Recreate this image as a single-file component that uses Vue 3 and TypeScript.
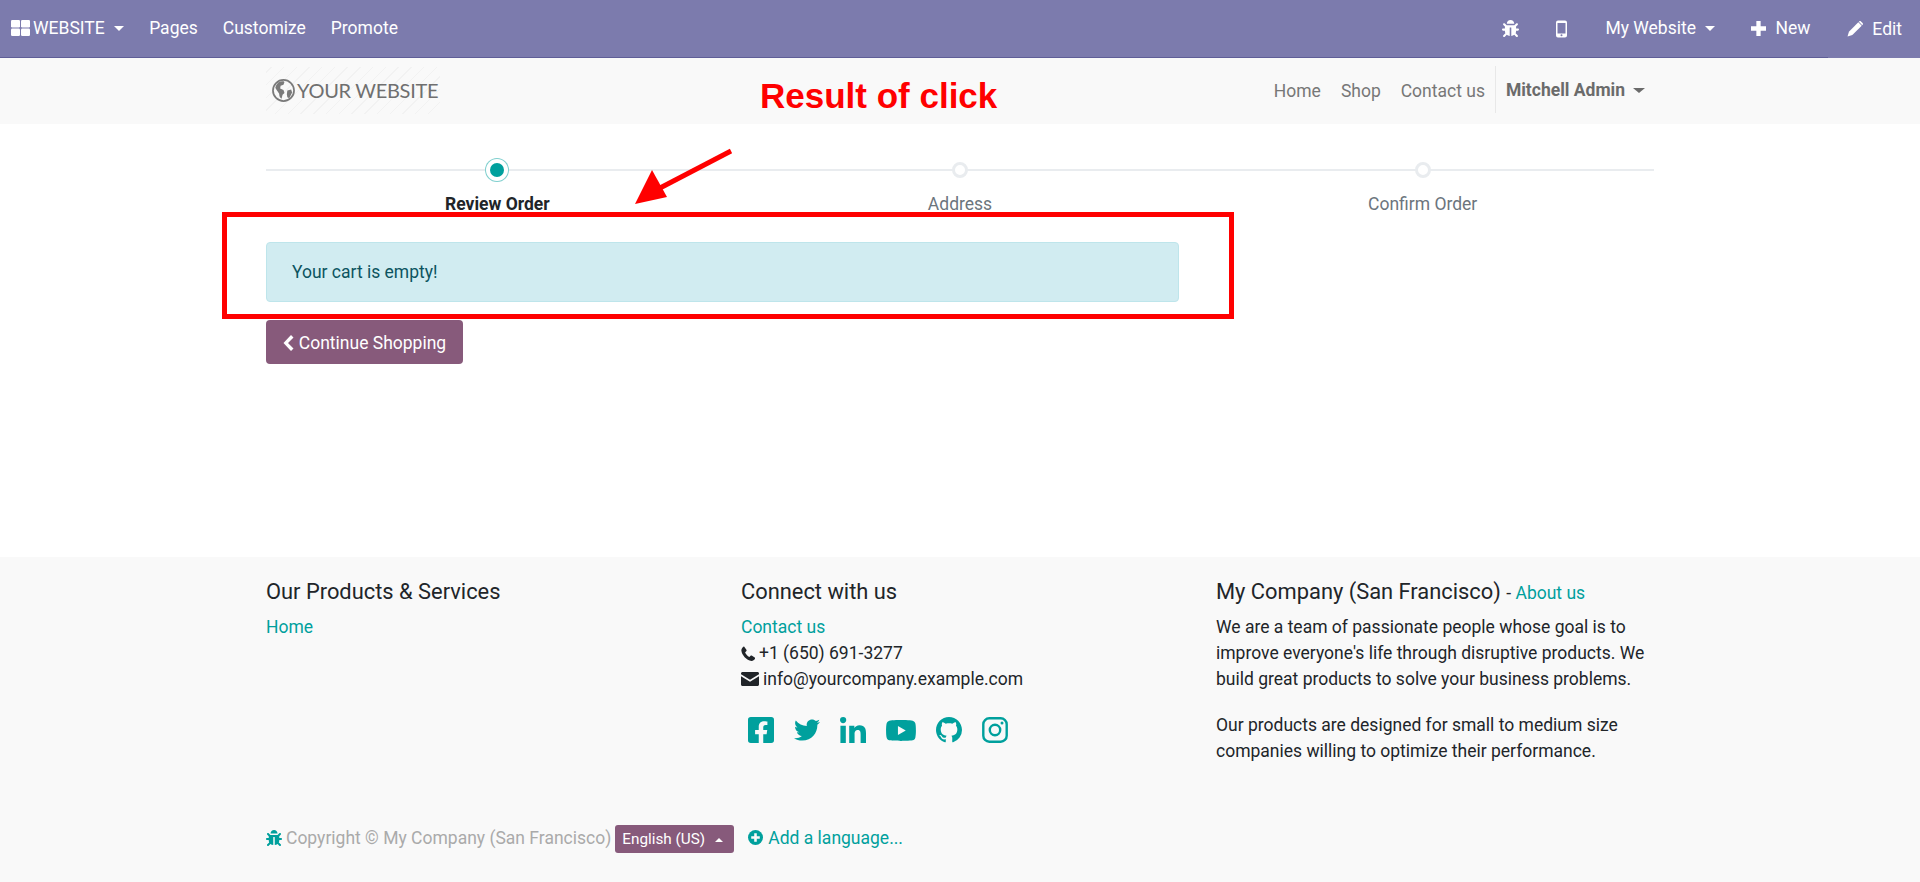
<script setup lang="ts">
interface SocialIcon {
  name: string
  viewBox: string
  d: string
}

const adminLinks = ['Pages', 'Customize', 'Promote']
const siteLinks = ['Home', 'Shop', 'Contact us']
const steps = [
  { label: 'Review Order', active: true },
  { label: 'Address', active: false },
  { label: 'Confirm Order', active: false },
]

const bug =
  'M511.988 288.9c-.478 17.43-15.217 31.1-32.653 31.1H424v16c0 21.864-4.882 42.584-13.6 61.145l60.228 60.228c12.496 12.497 12.496 32.758 0 45.255-12.498 12.497-32.759 12.496-45.256 0l-54.736-54.736C345.886 467.965 314.351 480 280 480V236c0-6.627-5.373-12-12-12h-24c-6.627 0-12 5.373-12 12v244c-34.351 0-65.886-12.035-90.636-32.108l-54.736 54.736c-12.498 12.497-32.759 12.496-45.256 0-12.496-12.497-12.496-32.758 0-45.255l60.228-60.228C92.882 378.584 88 357.864 88 336v-16H32.666C15.23 320 .491 306.33.013 288.9-.484 270.816 14.028 256 32 256h56v-58.745l-46.628-46.628c-12.496-12.497-12.496-32.758 0-45.255 12.498-12.497 32.758-12.497 45.256 0L141.255 160h229.489l54.627-54.627c12.498-12.497 32.758-12.497 45.256 0 12.496 12.497 12.496 32.758 0 45.255L424 197.255V256h56c17.972 0 32.484 14.816 31.988 32.9zM257 0c-61.856 0-112 50.144-112 112h224C369 50.144 318.856 0 257 0z'

const socials: SocialIcon[] = [
  {
    name: 'facebook',
    viewBox: '0 32 448 448',
    d: 'M400 32H48A48 48 0 0 0 0 80v352a48 48 0 0 0 48 48h137.25V327.69h-63V256h63v-54.64c0-62.15 37-96.48 93.67-96.48 27.14 0 55.52 4.84 55.52 4.84v61h-31.27c-30.81 0-40.42 19.12-40.42 38.73V256h68.78l-11 71.69h-57.78V480H400a48 48 0 0 0 48-48V80a48 48 0 0 0-48-48z',
  },
  {
    name: 'twitter',
    viewBox: '0 0 512 512',
    d: 'M459.37 151.716c.325 4.548.325 9.097.325 13.645 0 138.72-105.583 298.558-298.558 298.558-59.452 0-114.68-17.219-161.137-47.106 8.447.974 16.568 1.299 25.34 1.299 49.055 0 94.213-16.568 130.274-44.832-46.132-.975-84.792-31.188-98.112-72.772 6.498.974 12.995 1.624 19.818 1.624 9.421 0 18.843-1.3 27.614-3.573-48.081-9.747-84.143-51.98-84.143-102.985v-1.299c13.969 7.797 30.214 12.67 47.431 13.319-28.264-18.843-46.781-51.005-46.781-87.391 0-19.492 5.197-37.36 14.294-52.954 51.655 63.675 129.3 105.258 216.365 109.807-1.624-7.797-2.599-15.918-2.599-24.04 0-57.828 46.782-104.934 104.934-104.934 30.213 0 57.502 12.67 76.67 33.137 23.715-4.548 46.456-13.32 66.599-25.34-7.798 24.366-24.366 44.833-46.132 57.827 21.117-2.273 41.584-8.122 60.426-16.243-14.292 20.791-32.161 39.308-52.628 54.253z',
  },
  {
    name: 'linkedin',
    viewBox: '0 0 448 448',
    d: 'M100.28 448H7.4V148.9h92.88zM53.79 108.1C24.09 108.1 0 83.5 0 53.8a53.79 53.79 0 0 1 107.58 0c0 29.7-24.1 54.3-53.79 54.3zM447.9 448h-92.68V302.4c0-34.7-.7-79.2-48.29-79.2-48.29 0-55.69 37.7-55.69 76.7V448h-92.78V148.9h89.08v40.8h1.3c12.4-23.5 42.69-48.3 87.88-48.3 94 0 111.28 61.9 111.28 142.3V448z',
  },
  {
    name: 'youtube',
    viewBox: '15 64 546 384',
    d: 'M549.655 124.083c-6.281-23.65-24.787-42.276-48.284-48.597C458.781 64 288 64 288 64S117.22 64 74.629 75.486c-23.497 6.322-42.003 24.947-48.284 48.597-11.412 42.867-11.412 132.305-11.412 132.305s0 89.438 11.412 132.305c6.281 23.65 24.787 41.5 48.284 47.821C117.22 448 288 448 288 448s170.78 0 213.371-11.486c23.497-6.321 42.003-24.171 48.284-47.821 11.412-42.867 11.412-132.305 11.412-132.305s0-89.438-11.412-132.305zm-317.51 213.508V175.185l142.739 81.205-142.739 81.201z',
  },
  {
    name: 'github',
    viewBox: '0 0 16 16',
    d: 'M8 0C3.58 0 0 3.58 0 8c0 3.54 2.29 6.53 5.47 7.59.4.07.55-.17.55-.38 0-.19-.01-.82-.01-1.49-2.01.37-2.53-.49-2.69-.94-.09-.23-.48-.94-.82-1.13-.28-.15-.68-.52-.01-.53.63-.01 1.08.58 1.23.82.72 1.21 1.87.87 2.33.66.07-.52.28-.87.51-1.07-1.78-.2-3.64-.89-3.64-3.95 0-.87.31-1.59.82-2.15-.08-.2-.36-1.02.08-2.12 0 0 .67-.21 2.2.82.64-.18 1.32-.27 2-.27.68 0 1.36.09 2 .27 1.53-1.04 2.2-.82 2.2-.82.44 1.1.16 1.92.08 2.12.51.56.82 1.27.82 2.15 0 3.07-1.87 3.75-3.65 3.95.29.25.54.73.54 1.48 0 1.07-.01 1.93-.01 2.2 0 .21.15.46.55.38A8.013 8.013 0 0016 8c0-4.42-3.58-8-8-8z',
  },
]
</script>

<template>
  <div class="page">
    <nav class="admin-bar">
      <a class="admin-item first">
        <svg class="ico-grid" viewBox="0 0 19 16" width="19" height="16" fill="#fff">
          <rect width="9" height="7.5" rx="1.2" />
          <rect x="10" width="9" height="7.5" rx="1.2" />
          <rect y="8.5" width="9" height="7.5" rx="1.2" />
          <rect x="10" y="8.5" width="9" height="7.5" rx="1.2" />
        </svg>
        WEBSITE<span class="caret"></span>
      </a>
      <a v-for="link in adminLinks" :key="link" class="admin-item">{{ link }}</a>
      <div class="spacer"></div>
      <a class="admin-item icon-only">
        <svg viewBox="0 0 512 512" width="17" height="17" fill="#fff"><path :d="bug" /></svg>
      </a>
      <a class="admin-item icon-only">
        <svg viewBox="0 0 11 17" width="11" height="18">
          <path fill="#fff" fill-rule="evenodd" d="M2 0h7a2 2 0 0 1 2 2v13a2 2 0 0 1-2 2H2a2 2 0 0 1-2-2V2a2 2 0 0 1 2-2zM1.500 2.500v10.500h8V2.500zM5.500 13.800a1 1 0 1 0 0 2 1 1 0 0 0 0-2z" />
        </svg>
      </a>
      <a class="admin-item my-site">My Website<span class="caret"></span></a>
      <a class="admin-item new">
        <svg viewBox="0 0 14 14" width="15" height="15" fill="#fff"><path d="M5 0h4v5h5v4H9v5H5V9H0V5h5z" /></svg>
        New
      </a>
      <a class="admin-item edit">
        <svg viewBox="0 0 15 15" width="16" height="16" fill="#fff">
          <path d="M10.600 1.200 13.800 4.400 5 13.200.5 14.500 1.800 10z" />
          <path d="M11.400.4c.5-.5 1.200-.5 1.700 0l1.500 1.500c.5.5.5 1.200 0 1.700l-.3.3L11.100.7z" />
        </svg>
        Edit
      </a>
    </nav>

    <header class="site-header">
      <div class="container header-row">
        <div class="logo">
          <svg viewBox="0 0 24 24" width="23" height="23">
            <circle cx="12" cy="12" r="11" fill="none" stroke="#7a7a7a" stroke-width="1.800" />
            <path fill="#7a7a7a" d="M7 3.500c2-1 5-1.500 6-.5l-1 3-3 1-.5 3 3.500 1.500 1 3-2 2-1 4c-2-1-2.500-3-2.500-5L4.500 11 3.500 9C4 7 5.500 4.500 7 3.500zM16 12l4-1 1 3-3 6-2-1-.5-3z" />
          </svg>
          <span class="logo-text">YOUR WEBSITE</span>
        </div>
        <div class="spacer"></div>
        <a v-for="link in siteLinks" :key="link" class="site-link">{{ link }}</a>
        <a class="user-link">Mitchell Admin<span class="caret"></span></a>
      </div>
    </header>

    <main class="main">
      <div class="container">
        <div class="wizard">
          <div v-for="step in steps" :key="step.label" class="step" :class="{ active: step.active }">
            <span class="dot-slot"><span class="dot"></span></span>
            <span class="step-label">{{ step.label }}</span>
          </div>
        </div>
        <div class="alert">Your cart is empty!</div>
        <a class="continue">
          <svg viewBox="0 0 10 16" width="11" height="16" fill="#fff"><path d="M7.500 0l2.500 2.500L4.500 8l5.500 5.500L7.500 16 0 8z" /></svg>
          Continue Shopping
        </a>
      </div>

      <!-- annotations painted over the screenshot -->
      <div class="note-title">Result of click</div>
      <svg class="note-arrow" viewBox="0 0 110 64" width="110" height="64">
        <path d="M101 6 30 43" stroke="#f00" stroke-width="5" fill="none" />
        <path d="M5 59 22 25 37 52z" fill="#f00" />
      </svg>
      <div class="note-box"></div>
    </main>

    <footer class="site-footer">
      <div class="container">
        <div class="footer-cols">
          <section>
            <h5>Our Products &amp; Services</h5>
            <a class="link">Home</a>
          </section>
          <section>
            <h5>Connect with us</h5>
            <a class="link">Contact us</a>
            <div class="contact">
              <svg viewBox="0 0 13 14" width="14" height="15" fill="#212529">
                <path d="M3 .6 5 3.600c.3.500.2 1-.2 1.400L3.800 6c.7 1.700 2.200 3.300 4 4.200l1.100-1c.4-.4 1-.4 1.400-.1l2.500 1.700c.4.300.4.700.2 1.100-.8 1.300-2 2.100-3.200 2C5 13.500.7 8.500.3 4.300.2 3 1 1.500 2.200.6c.3-.2.600-.2.800 0z" />
              </svg>
              +1 (650) 691-3277
            </div>
            <div class="contact">
              <svg viewBox="0 0 18 14" width="18" height="14" fill="#212529">
                <path d="M1.500 0h15C17.300 0 18 .7 18 1.500v.8L9 7.800 0 2.300v-.8C0 .7.700 0 1.500 0z" />
                <path d="M0 4.200 9 9.800l9-5.600v8.300c0 .8-.7 1.500-1.500 1.500h-15C.7 14 0 13.300 0 12.500z" />
              </svg>
              info@yourcompany.example.com
            </div>
            <div class="socials">
              <svg v-for="icon in socials" :key="icon.name" class="social" :class="icon.name" :viewBox="icon.viewBox" fill="#00a09d">
                <path :d="icon.d" />
              </svg>
              <svg class="social" viewBox="0 0 26 26" fill="none" stroke="#00a09d">
                <rect x="1.300" y="1.300" width="23.400" height="23.400" rx="6" stroke-width="2.400" />
                <circle cx="13" cy="13" r="5.200" stroke-width="2.400" />
                <circle cx="20" cy="6" r="1.500" fill="#00a09d" stroke="none" />
              </svg>
            </div>
          </section>
          <section>
            <h5>My Company (San Francisco) <small>- <a class="link">About us</a></small></h5>
            <p>We are a team of passionate people whose goal is to improve everyone's life through disruptive products. We build great products to solve your business problems.</p>
            <p>Our products are designed for small to medium size companies willing to optimize their performance.</p>
          </section>
        </div>
        <div class="copyright">
          <svg viewBox="0 0 512 512" width="16" height="16" fill="#00a09d"><path :d="bug" /></svg>
          <span class="copy-text">Copyright © My Company (San Francisco)</span>
          <a class="lang">English (US)<span class="caret up"></span></a>
          <a class="link add-lang">
            <svg viewBox="0 0 14 14" width="15" height="15">
              <circle cx="7" cy="7" r="7" fill="#00a09d" />
              <path d="M5.800 3h2.400v2.800H11v2.400H8.200V11H5.800V8.200H3V5.800h2.800z" fill="#f9f9f9" />
            </svg>
            Add a language...
          </a>
        </div>
      </div>
    </footer>
  </div>
</template>

<style scoped>
.page {
  height: 882px;
  display: flex;
  flex-direction: column;
  font-family: Roboto, "Liberation Sans", sans-serif;
  font-size: 17.5px;
  line-height: 1.5;
  color: #212529;
  background: #fff;
  overflow: hidden;
}

.container {
  width: 1388px;
  margin: 0 auto;
}

.spacer {
  flex: 1;
}

.caret {
  display: inline-block;
  margin-left: 10px;
  vertical-align: 3px;
  border-top: 5px solid currentColor;
  border-left: 5px solid transparent;
  border-right: 5px solid transparent;
}

.caret.up {
  border-top: 0;
  border-bottom: 4px solid currentColor;
  border-left-width: 4px;
  border-right-width: 4px;
}

/* admin bar */
.admin-bar {
  height: 57px;
  flex: none;
  display: flex;
  align-items: center;
  background: #7c7bad;
  border-bottom: 1px solid #5f5e97;
  color: #fff;
}

.admin-item {
  display: flex;
  align-items: center;
  padding: 0 12.5px;
  white-space: nowrap;
}

.admin-item .caret {
  margin-left: 9px;
}

.admin-item.first {
  padding-left: 11px;
  padding-right: 13px;
}

.ico-grid {
  margin-right: 3px;
  margin-top: -2px;
}

.icon-only {
  padding: 0 18.5px;
}

.admin-item.my-site {
  padding-left: 20px;
}

.admin-item.new {
  gap: 9px;
  padding: 0 18px 0 24px;
}

.admin-item.edit {
  gap: 9px;
  align-self: stretch;
  margin-bottom: -1px;
  padding: 0 18px 0 19px;
  background: #7c7bad;
}

/* site header */
.site-header {
  height: 66px;
  flex: none;
  background: #f9f9f9;
}

.header-row {
  height: 100%;
  display: flex;
  align-items: center;
  color: #777;
}

.logo {
  width: 174px;
  height: 47px;
  display: flex;
  align-items: center;
  gap: 2px;
  padding-left: 6px;
  box-sizing: border-box;
  margin-top: -2px;
  background: repeating-linear-gradient(-45deg, #f9f9f9 0 8px, #f2f2f2 8px 9px);
}

.logo-text {
  font-family: Lato, sans-serif;
  font-size: 20px;
  color: #6f6f6f;
  letter-spacing: -0.3px;
}

.site-link {
  margin-left: 20px;
}

.user-link {
  height: 47px;
  line-height: 49px;
  margin-top: -3px;
  margin-left: 10px;
  padding-left: 10px;
  padding-right: 9px;
  border-left: 1px solid #e8e8e8;
  font-weight: 700;
  color: #6b6b6b;
}

.user-link .caret {
  margin-left: 8px;
  border-left-width: 6px;
  border-right-width: 6px;
}

/* main */
.main {
  position: relative;
  height: 433px;
  flex: none;
  box-sizing: border-box;
}

.wizard {
  position: relative;
  display: grid;
  grid-template-columns: repeat(3, 1fr);
  padding-top: 34px;
}

.wizard::before {
  content: "";
  position: absolute;
  left: 0;
  right: 0;
  top: 45px;
  height: 2px;
  background: #e9ecef;
}

.step {
  position: relative;
  display: flex;
  flex-direction: column;
  align-items: center;
  color: #6c757d;
}

.dot-slot {
  height: 24px;
  display: flex;
  align-items: center;
  justify-content: center;
}

.dot {
  width: 10px;
  height: 10px;
  border-radius: 50%;
  background: #fff;
  border: 3px solid #e9ecef;
}

.step.active .dot {
  width: 14px;
  height: 14px;
  background: #00a09d;
  border: 0;
  box-shadow: 0 0 0 4px #fff, 0 0 0 5px #7fcfce;
}

.step-label {
  margin-top: 9px;
}

.step.active .step-label {
  font-weight: 700;
  color: #212529;
}

.alert {
  width: 913px;
  height: 60px;
  box-sizing: border-box;
  margin-top: 25px;
  padding: 16px 25px;
  background: #d1ecf1;
  border: 1px solid #bee5eb;
  border-radius: 4px;
  color: #0c5460;
}

.continue {
  width: 197px;
  height: 44px;
  box-sizing: border-box;
  margin-top: 18px;
  padding-top: 2px;
  display: flex;
  align-items: center;
  justify-content: center;
  gap: 5px;
  background: #875a7b;
  border-radius: 4px;
  color: #fff;
}

.note-title {
  position: absolute;
  left: 760px;
  top: -48px;
  font-family: "Liberation Sans", sans-serif;
  font-size: 35px;
  line-height: 40px;
  font-weight: 700;
  color: #f00;
}

.note-arrow {
  position: absolute;
  left: 630px;
  top: 21px;
}

.note-box {
  position: absolute;
  left: 222px;
  top: 88px;
  width: 1012px;
  height: 107px;
  box-sizing: border-box;
  border: 5px solid #f00;
}

/* footer */
.site-footer {
  flex: 1;
  background: #f9f9f9;
  line-height: 26px;
}

.footer-cols {
  display: grid;
  grid-template-columns: 475px 475px 1fr;
  height: 228px;
  padding-top: 22px;
  box-sizing: border-box;
}

h5 {
  margin: 0 0 9px;
  font-size: 21.875px;
  font-weight: 400;
  line-height: 1.2;
}

small {
  font-size: 17.5px;
}

.link {
  color: #00a09d;
}

.contact {
  display: flex;
  align-items: center;
  gap: 4px;
}

.socials {
  display: flex;
  align-items: center;
  gap: 20px;
  margin-top: 25px;
  padding-left: 7px;
}

.social {
  width: 26px;
  height: 26px;
}

.social.youtube {
  width: 30px;
  height: 21px;
}

p {
  width: 445px;
  margin: 0 0 20px;
}

.copyright {
  display: flex;
  align-items: center;
  margin-top: 39px;
  height: 27px;
  color: #aaa;
}

.copy-text {
  margin-left: 4px;
}

.lang {
  width: 119px;
  height: 28px;
  box-sizing: border-box;
  margin-left: 4px;
  margin-top: 2px;
  padding-left: 7px;
  background: #875a7b;
  border-radius: 3px;
  color: #fff;
  font-size: 15.3px;
  line-height: 29px;
}

.lang .caret {
  margin-left: 10px;
  vertical-align: 2px;
}

.add-lang {
  display: flex;
  align-items: center;
  gap: 5px;
  margin-left: 14px;
}
</style>

<style>
html,
body {
  margin: 0;
  background: #fff;
}
</style>
